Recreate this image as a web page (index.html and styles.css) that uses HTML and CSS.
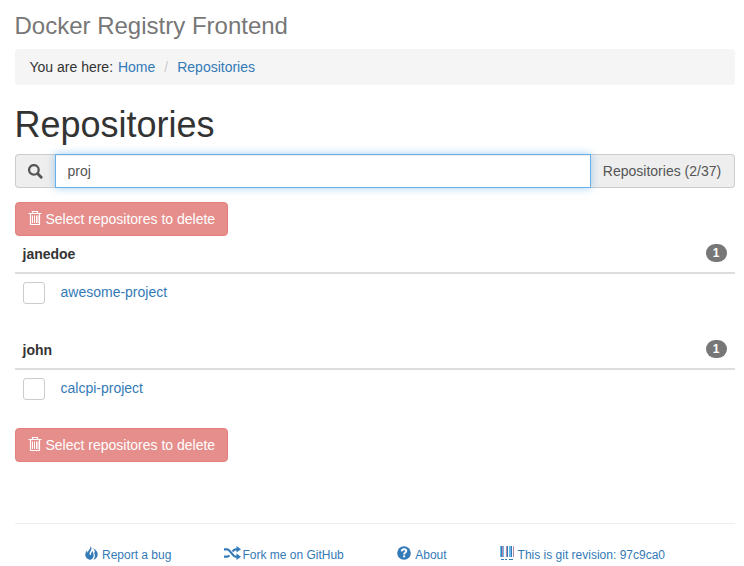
FILE: index.html
```html
<!DOCTYPE html>
<html lang="en">
<head>
<meta charset="utf-8">
<title>Docker Registry Frontend</title>
<link rel="stylesheet" href="styles.css">
</head>
<body>
<svg class="defs" width="0" height="0">
  <symbol id="trash" viewBox="0 0 14 16">
    <path fill="none" stroke="currentColor" stroke-width="1.200" d="M.5 3.500h13M4.500 3V1.500h5V3M2.500 4v10.500h9V4"/><path fill="none" stroke="currentColor" d="M4.500 5.500V13M6.500 5.500V13M8.500 5.500V13M10 5.500V13"/>
  </symbol>
</svg>
<div class="container">
  <h3 class="brand">Docker Registry Frontend</h3>
  <nav class="breadcrumb">You are here: <a class="home" href="#">Home</a><span class="separator">/</span><a href="#">Repositories</a></nav>
  <h1>Repositories</h1>
  <div class="input-group">
    <span class="addon addon-icon"><svg width="15" height="15" viewBox="0 0 14 14"><circle cx="5.500" cy="5.500" r="4.500" fill="none" stroke="currentColor" stroke-width="2.100"/><path d="M8.900 8.900l3.400 3.400" stroke="currentColor" stroke-width="2.700" stroke-linecap="round"/></svg></span>
    <input class="search" type="text" value="proj">
    <span class="addon addon-count">Repositories (2/37)</span>
  </div>
  <button class="btn-delete" disabled><svg width="14" height="16"><use href="#trash"/></svg>Select repositores to delete</button>
  <section class="group">
    <header class="group-head"><strong>janedoe</strong><span class="badge">1</span></header>
    <div class="row"><span class="checkbox"></span><a href="#">awesome-project</a></div>
  </section>
  <section class="group">
    <header class="group-head"><strong>john</strong><span class="badge">1</span></header>
    <div class="row"><span class="checkbox"></span><a href="#">calcpi-project</a></div>
  </section>
  <button class="btn-delete" disabled><svg width="14" height="16"><use href="#trash"/></svg>Select repositores to delete</button>
  <footer class="footer">
    <a class="bug" href="#"><svg width="13" height="14" viewBox="0 0 13 14" fill="currentColor"><path d="M5.500 0C7.200 2 6.500 3.900 5.500 5.200 4.600 6.400 4.200 7.700 4.900 8.700c.5.700 1.200.4 1.100-.4C5.900 7.200 6.600 5.900 7.800 4.900c-.1 1.700 1 2.700.9 4.600-.1 1.800-1.200 3.300-2.900 4.300-3.300-.2-5.500-2.500-5.500-5.100 0-1.900.8-3.300 1.900-4.300C2.100 5.600 2.300 6.400 2.700 7 2.800 4.500 5.900 3.300 5.500 0z"/><path d="M8.100 1.900c2.900 1.700 4.800 4 4.600 6.900-.1 2.300-1.700 4.300-4.400 5 1.300-1.700 1.900-3.500 1.500-5.100-.3-1.200-.8-1.800-.6-3 .3.500.5.700.8.900.1-1.700-.8-2.900-1.900-4.700z"/></svg>Report a bug</a>
    <a class="fork" href="#"><svg width="17" height="14" viewBox="0 0 17 14"><g fill="none" stroke="currentColor" stroke-width="2.200"><path d="M0 3.300h3.200c1 0 1.500.5 2.200 1.300l4 4.800c.7.900 1.300 1.300 2.300 1.300H13M0 10.700h3.200c1 0 1.500-.5 2.200-1.300M8.600 5.500l.8-.9c.7-.9 1.300-1.300 2.300-1.300H13"/></g><path fill="currentColor" d="M12.500 0L17 3.300l-4.500 3.300zM12.500 7.400l4.500 3.300-4.500 3.300z"/></svg>Fork me on GitHub</a>
    <a class="about" href="#"><svg width="14" height="14" viewBox="0 0 14 14"><circle cx="7" cy="7" r="6.800" fill="currentColor"/><path d="M4.700 5.400C4.800 3.900 5.700 3.200 7 3.200s2.300.7 2.300 1.900C9.300 6.600 7.100 6.500 7.100 8.500" fill="none" stroke="#fff" stroke-width="1.900"/><path d="M6.100 9.400h2v1.900h-2z" fill="#fff"/></svg>About</a>
    <a class="revision" href="#"><svg width="15" height="14" viewBox="0 0 15 14" shape-rendering="crispEdges"><path fill="#69b8e8" d="M0 0h1v11H0zM3 0h1v11H3zM9 0h2v11H9z"/><path fill="#b987a8" d="M2 0h1v11H2zM6 0h1v11H6zM13 0h1v11h-1z"/><path fill="#337ab7" d="M1 0h1v11H1zM7 0h1v11H7zM11 0h1v11h-1zM1 13h3v1H1zM5 13h2v1H5zM9 13h4v1H9z"/></svg>This is git revision: 97c9ca0</a>
  </footer>
</div>
</body>
</html>
```
FILE: styles.css
```css
* { box-sizing: border-box; }
body { margin: 0; background: #fff; color: #333; font: 14px/20px "Liberation Sans", Arial, sans-serif; overflow: hidden; }
a { color: #337ab7; text-decoration: none; }
.defs { display: block; }
.container { padding: 13px 9.500px 0 14.500px; }
.brand { margin: 0 0 10px; color: #777; font-size: 24px; font-weight: 500; line-height: 26px; }
.breadcrumb { height: 36px; margin-bottom: 20px; padding: 8px 15px; background: #f5f5f5; border-radius: 4px; }
.home { margin-left: 1px; }
.separator { padding: 0 9px; color: #ccc; }
h1 { margin: 0 0 9px; font-size: 36px; font-weight: 500; line-height: 40px; }
.input-group { display: flex; height: 34px; margin-bottom: 14px; }
.addon { display: flex; align-items: center; justify-content: center; background: #eee; border: 1px solid #ccc; color: #555; }
.addon-icon { width: 40px; border-right: 0; border-radius: 4px 0 0 4px; }
.addon-count { width: 144px; border-left: 0; border-radius: 0 4px 4px 0; }
.search { position: relative; flex: 1; min-width: 0; padding: 6px 12px; border: 1px solid #66afe9; border-radius: 0; outline: 0; color: #555; font: inherit; box-shadow: inset 0 1px 1px rgba(0, 0, 0, .075), 0 0 8px rgba(102, 175, 233, .6); }
.btn-delete { display: flex; align-items: center; gap: 4px; width: 213px; height: 34px; padding: 0 12px; background: #d9534f; border: 1px solid #d43f3a; border-radius: 4px; color: #fff; font: inherit; white-space: nowrap; opacity: .65; }
.btn-delete svg { flex: none; margin-top: -3px; }
.group { margin-bottom: 20px; }
.group-head { display: flex; justify-content: space-between; height: 38px; padding: 8px; border-bottom: 2px solid #ddd; }
.badge { width: 21px; height: 18px; border-radius: 10px; background: #777; color: #fff; font-size: 12px; font-weight: 700; line-height: 18px; text-align: center; }
.row { display: flex; height: 38px; padding: 8px; }
.checkbox { width: 22px; height: 22px; margin-right: 16px; border: 1px solid #ccc; border-radius: 3px; }
.footer { display: flex; justify-content: center; gap: 53.500px; height: 43px; margin-top: 61px; padding-top: 21px; border-top: 1px solid #eee; font-size: 12px; white-space: nowrap; }
.footer a { display: flex; height: 20px; }
.footer svg { flex: none; margin: 1px 4px 0 0; }
.footer .bug { margin: 0 -.5px 0 1px; }
.footer .fork svg { margin-right: 1px; }
.footer .revision { margin-left: -.5px; }
.footer .revision svg { margin-right: 3px; }
```
